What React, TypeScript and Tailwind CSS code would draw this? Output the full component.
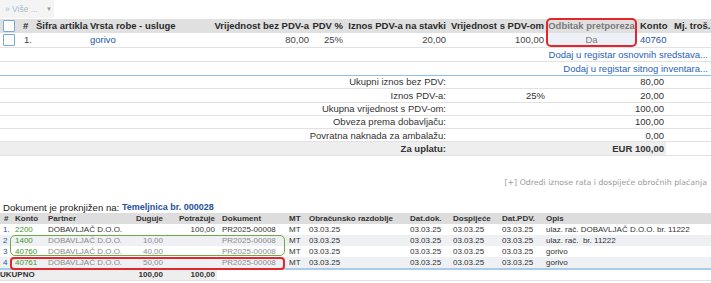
import React from 'react';

const topCols = 'grid grid-cols-[18px_15px_55px_90px_133px_34px_103px_98px_91px_33px_41px]';
const sumCols = 'grid grid-cols-[446px_99px_121px_45px]';
const ledgerCols = 'grid grid-cols-[13px_32px_80px_40px_52px_70px_20px_101px_43px_49px_44px_167px]';

const Checkbox: React.FC = () => (
  <div className="flex items-center justify-center">
    <div className="w-[12px] h-[12px] border border-[#7aa7d6] bg-white rounded-[1px]" />
  </div>
);

type LedgerRow = {
  n: string;
  konto: string;
  duguje: string;
  potrazuje: string;
  opis: string;
  muted: boolean;
};

const ledger: LedgerRow[] = [
  { n: '1.', konto: '2200', duguje: '', potrazuje: '100,00', opis: 'ulaz. rač. DOBAVLJAČ D.O.O. br. 11222', muted: false },
  { n: '2', konto: '1400', duguje: '10,00', potrazuje: '', opis: 'ulaz. rač.  br. 11222', muted: true },
  { n: '3', konto: '40760', duguje: '40,00', potrazuje: '', opis: 'gorivo', muted: true },
  { n: '4', konto: '40761', duguje: '50,00', potrazuje: '', opis: 'gorivo', muted: true },
];

const totals = [
  { label: 'Ukupni iznos bez PDV:', pct: '', value: '80,00' },
  { label: 'Iznos PDV-a:', pct: '25%', value: '20,00' },
  { label: 'Ukupna vrijednost s PDV-om:', pct: '', value: '100,00' },
  { label: 'Obveza prema dobavljaču:', pct: '', value: '100,00' },
  { label: 'Povratna naknada za ambalažu:', pct: '', value: '0,00' },
];

const App: React.FC = () => {
  return (
    <div className="w-[711px] h-[283px] overflow-hidden bg-white text-[#333] font-['Liberation_Sans',Arial,sans-serif] text-[9.5px] leading-none">
      {/* Toolbar */}
      <div className="h-[19px] flex">
        <div className="w-[54px] h-[18px] bg-[#f4f4f4] flex items-center pl-[5px] gap-[8px] text-[#a9bccf] text-[8.5px]">
          <span>» Više ...</span>
          <span className="text-[#999] text-[6px]">▼</span>
        </div>
      </div>

      {/* Items table */}
      <div className="relative">
        <div className={`${topCols} h-[14px] bg-[#e0e0e0] font-bold text-[#2a2a2a]`}>
          <Checkbox />
          <div className="flex items-center pl-[5px]">#</div>
          <div className="flex items-center pl-[3px]">Šifra artikla</div>
          <div className="flex items-center pl-[2px]">Vrsta robe - usluge</div>
          <div className="flex items-center justify-end pr-[2px]">Vrijednost bez PDV-a</div>
          <div className="flex items-center justify-end pr-[2px]">PDV %</div>
          <div className="flex items-center justify-end pr-[2px]">Iznos PDV-a na stavki</div>
          <div className="flex items-center justify-end pr-[2px]">Vrijednost s PDV-om</div>
          <div className="flex items-center justify-center text-[#7a7a7a]">Odbitak pretporeza</div>
          <div className="flex items-center pl-[3px]">Konto</div>
          <div className="flex items-center pl-[4px]">Mj. troš.</div>
        </div>
        <div className={`${topCols} h-[15px] border-b border-[#e2e2e2] text-[#444]`}>
          <Checkbox />
          <div className="flex items-center pl-[6px]">1.</div>
          <div />
          <div className="flex items-center pl-[2px] text-[#1f55a8]">gorivo</div>
          <div className="flex items-center justify-end pr-[2px]">80,00</div>
          <div className="flex items-center justify-end pr-[2px]">25%</div>
          <div className="flex items-center justify-end pr-[2px]">20,00</div>
          <div className="flex items-center justify-end pr-[2px]">100,00</div>
          <div className="flex items-center justify-center bg-[#edf0f6] text-[#808080]">Da</div>
          <div className="flex items-center pl-[3px] text-[#1f55a8]">40760</div>
          <div />
        </div>
        <div className="absolute left-[546px] top-[-1px] w-[91px] h-[29px] border-2 border-[#e3262b] rounded-[5px]" />
      </div>

      {/* Register links */}
      <div className="h-[14px] border-b border-[#e2e2e2] flex items-center justify-end pr-[3px] text-[#2a62b8]">
        Dodaj u registar osnovnih sredstava...
      </div>
      <div className="h-[14px] border-b border-[#8fc0ea] flex items-center justify-end pr-[3px] text-[#2a62b8]">
        Dodaj u registar sitnog inventara...
      </div>

      {/* Totals */}
      {totals.map((t) => (
        <div key={t.label} className={`${sumCols} h-[13.3px] border-b border-[#e2e2e2]`}>
          <div className="flex items-center justify-end">{t.label}</div>
          <div className="flex items-center justify-end">{t.pct}</div>
          <div className="flex items-center justify-end pr-[2px]">{t.value}</div>
          <div />
        </div>
      ))}
      <div className={`${sumCols} h-[14px] border-b border-[#e2e2e2] font-bold`}>
        <div className="flex items-center justify-end bg-[#eeeeee]">Za uplatu:</div>
        <div className="bg-[#eeeeee]" />
        <div className="flex items-center justify-end pr-[2px] bg-[#eeeeee]">EUR 100,00</div>
        <div />
      </div>

      {/* Installments */}
      <div className="h-[45px] flex items-center justify-end pr-[4px] pt-[7px] text-[#9a9a9a] font-['DejaVu_Sans',Verdana,sans-serif] text-[7.8px]">
        [+] Odredi iznose rata i dospijeće obročnih plaćanja
      </div>

      {/* Posting */}
      <div className="h-[12px] flex items-center pl-[3px] text-[9.6px] text-[#222]">
        <span>Dokument je proknjižen na:&nbsp;</span>
        <span className="text-[#1f4fa3] font-bold text-[9px]">Temeljnica br. 000028</span>
      </div>

      <div className="relative text-[8px]">
        <div className={`${ledgerCols} h-[11px] bg-[#dddddd] font-bold text-[#333]`}>
          <div className="flex items-center pl-[4px]">#</div>
          <div className="flex items-center pl-[2px]">Konto</div>
          <div className="flex items-center pl-[3px]">Partner</div>
          <div className="flex items-center justify-end pr-[2px]">Duguje</div>
          <div className="flex items-center justify-end pr-[2px]">Potražuje</div>
          <div className="flex items-center pl-[5px]">Dokument</div>
          <div className="flex items-center pl-[2px]">MT</div>
          <div className="flex items-center pl-[2px]">Obračunsko razdoblje</div>
          <div className="flex items-center pl-[2px]">Dat.dok.</div>
          <div className="flex items-center pl-[2px]">Dospijeće</div>
          <div className="flex items-center pl-[2px]">Dat.PDV.</div>
          <div className="flex items-center pl-[2px]">Opis</div>
        </div>
        {ledger.map((r, i) => {
          const muted = r.muted ? 'text-[#8c8c8c]' : 'text-[#333]';
          return (
            <div key={r.n} className={`${ledgerCols} h-[11px] ${i % 2 === 1 ? 'bg-[#eef0f3]' : 'bg-white'}`}>
              <div className="flex items-center pl-[3px] text-[#1f55a8]">{r.n}</div>
              <div className="flex items-center pl-[2px] text-[#3f9a2f]">{r.konto}</div>
              <div className={`flex items-center pl-[3px] ${muted}`}>DOBAVLJAČ D.O.O.</div>
              <div className={`flex items-center justify-end pr-[2px] ${muted}`}>{r.duguje}</div>
              <div className={`flex items-center justify-end pr-[2px] ${muted}`}>{r.potrazuje}</div>
              <div className={`flex items-center pl-[5px] ${muted}`}>PR2025-00008</div>
              <div className="flex items-center pl-[2px]">MT</div>
              <div className="flex items-center pl-[2px]">03.03.25</div>
              <div className="flex items-center pl-[2px]">03.03.25</div>
              <div className="flex items-center pl-[2px]">03.03.25</div>
              <div className="flex items-center pl-[2px]">03.03.25</div>
              <div className="flex items-center pl-[2px] whitespace-pre">{r.opis}</div>
            </div>
          );
        })}
        <div className={`${ledgerCols} h-[13px] border-t-2 border-[#a9cbea] border-b border-b-[#e2e2e2] font-bold`}>
          <div className="col-span-3 flex items-center bg-[#eeeeee]">UKUPNO</div>
          <div className="flex items-center justify-end pr-[2px] bg-[#eeeeee]">100,00</div>
          <div className="flex items-center justify-end pr-[2px] bg-[#eeeeee]">100,00</div>
        </div>

        <div className="absolute left-[10px] top-[22px] w-[275px] h-[21px] border-[1.5px] border-[#6aab45] rounded-[5px]" />
        <div className="absolute left-[10px] top-[44px] w-[275px] h-[13px] border-2 border-[#e3262b] rounded-[4px]" />
      </div>
    </div>
  );
};

export default App;
